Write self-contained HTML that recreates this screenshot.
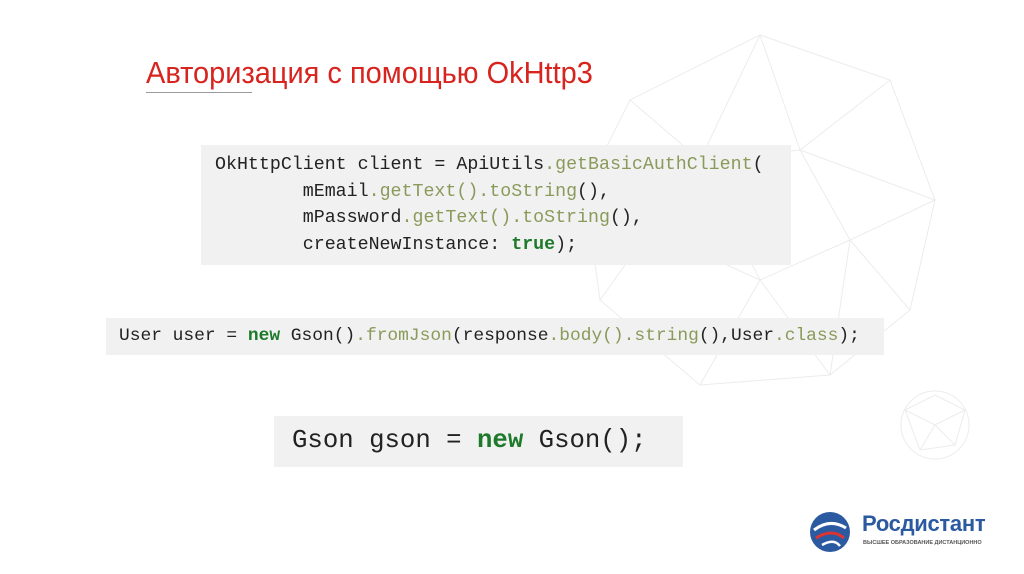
<!DOCTYPE html>
<html><head><meta charset="utf-8"><style>
body{margin:0;width:1024px;height:574px;background:#fff;position:relative;overflow:hidden;font-family:"Liberation Sans",sans-serif}
.t{position:absolute;left:146px;top:55px;font-size:31px;color:#d8241f;white-space:nowrap;transform:scaleX(0.935);transform-origin:left top}
.ul{position:absolute;left:146px;top:92px;width:106px;height:1px;background:#9a9a9a}
.box{position:absolute;background:#f1f1f1}
.code{font-family:"Liberation Mono",monospace;color:#222;white-space:pre;position:absolute}
.g{color:#8a9a5a}.k{color:#1e7a2a;font-weight:bold}
</style></head><body>
<svg width="1024" height="574" style="position:absolute;left:0;top:0" stroke="#ececec" fill="none" stroke-width="1">
<polygon points="630,100 760,35 890,80 935,200 910,310 830,375 700,385 600,300 585,190"/>
<polyline points="630,100 700,160 760,35 800,150 890,80"/><polyline points="700,160 800,150 850,240 760,280 700,160 650,230 600,300"/><polyline points="800,150 935,200 850,240 910,310"/><polyline points="760,280 830,375 850,240"/><polyline points="650,230 760,280 700,385"/><polyline points="585,190 700,160"/>
<circle cx="935" cy="425" r="34"/><polyline points="905,410 935,395 965,410 955,445 920,450 905,410 935,425 965,410"/><polyline points="935,425 955,445"/><polyline points="935,425 920,450"/>
</svg>
<div class="t">Авторизация с помощью OkHttp3</div>
<div class="ul"></div>
<div class="box" style="left:201px;top:145px;width:590px;height:120px"></div>
<div class="code" style="left:215px;top:152px;font-size:18.3px;line-height:26.5px">OkHttpClient client = ApiUtils<span class="g">.getBasicAuthClient</span>(
        mEmail<span class="g">.getText().toString</span>(),
        mPassword<span class="g">.getText().toString</span>(),
        createNewInstance: <span class="k">true</span>);</div>
<div class="box" style="left:106px;top:318px;width:778px;height:37px"></div>
<div class="code" style="left:119px;top:325px;font-size:17.9px;line-height:22px">User user = <span class="k">new</span> Gson()<span class="g">.fromJson</span>(response<span class="g">.body().string</span>(),User<span class="g">.class</span>);</div>
<div class="box" style="left:274px;top:416px;width:409px;height:51px"></div>
<div class="code" style="left:292px;top:425px;font-size:25.7px;line-height:32px">Gson gson = <span class="k">new</span> Gson();</div>
<svg width="44" height="44" style="position:absolute;left:808px;top:510px" viewBox="0 0 44 44">
<circle cx="22" cy="22" r="20" fill="#2c5aa0"/><path d="M6 20 Q22 8 38 18" stroke="#fff" stroke-width="3" fill="none"/><path d="M8 28 Q24 18 36 28" stroke="#d33" stroke-width="3" fill="none"/><path d="M14 35 Q26 28 32 36" stroke="#fff" stroke-width="2.5" fill="none"/></svg>
<div style="position:absolute;left:862px;top:511px;font-size:22px;font-weight:bold;color:#2c5aa0;letter-spacing:-0.3px">Росдистант</div>
<div style="position:absolute;left:863px;top:540px;font-size:5.5px;color:#555;white-space:nowrap;font-weight:bold">ВЫСШЕЕ ОБРАЗОВАНИЕ ДИСТАНЦИОННО</div>
</body></html>
